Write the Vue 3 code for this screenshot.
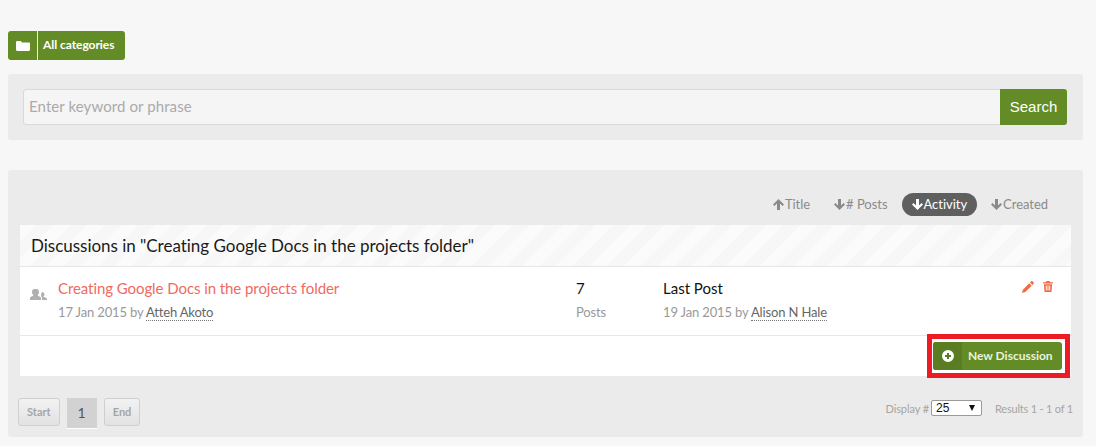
<template>
  <div class="page">
    <a class="cat-btn">
      <span class="cat-icon">
        <svg width="14" height="12" viewBox="0 0 14 12"><path d="M1.2 1h3.6l1.2 1.5h6.800c.6 0 1.200.5 1.200 1.100v6.200c0 .7-.6 1.200-1.200 1.200H1.200C.6 11 0 10.500 0 9.800V2.200C0 1.500.6 1 1.200 1z" fill="#fff" /></svg>
      </span>
      <span class="cat-label">All categories</span>
    </a>

    <div class="panel search-panel">
      <div class="search-box">
        <div class="search-input">Enter keyword or phrase</div>
        <div class="search-btn">Search</div>
      </div>
    </div>

    <div class="panel main-panel">
      <div class="sort-row">
        <span v-for="s in sorts" :key="s.label" class="sort" :class="{ active: s.active }">
          <svg class="arrow" :class="{ up: s.up }" width="11" height="11" viewBox="0 0 11 11"><path d="M5.500 11 0 5.500l1.500-1.400 2.500 2.500V0h3v6.600l2.500-2.500L11 5.500z" fill="currentColor" /></svg>{{ s.label }}
        </span>
      </div>

      <div class="list">
        <div class="list-head">Discussions in "Creating Google Docs in the projects folder"</div>
        <div class="row">
          <svg class="people" width="17" height="11" viewBox="0 0 17 11">
            <path d="M6.500 0C8 0 9 1.200 9 3c0 1.300-.5 2.300-1.200 2.900v.8c1.600.5 3.200 1.300 3.200 2.300v2H0V9c0-1 1.600-1.800 3.200-2.300v-.8C2.500 5.300 2 4.300 2 3c0-1.800 1-3 2.500-3z" fill="#b0b0b0" />
            <path d="M12.500 3c1.200 0 2 1 2 2.300 0 1-.4 1.800-1 2.200v.5c1.600.4 3.500 1 3.500 1.800V11h-5V9c0-.7-.4-1.300-1-1.800.2-.5.200-1 .1-1.500.1-1.500 1-2.700 1.400-2.700z" fill="#b0b0b0" />
          </svg>
          <div class="col-title">
            <div class="title">Creating Google Docs in the projects folder</div>
            <div class="meta">17 Jan 2015 by <span class="user">Atteh Akoto</span></div>
          </div>
          <div class="col-posts">
            <div class="big">7</div>
            <div class="meta">Posts</div>
          </div>
          <div class="col-last">
            <div class="big">Last Post</div>
            <div class="meta">19 Jan 2015 by <span class="user">Alison N Hale</span></div>
          </div>
          <div class="actions">
            <svg width="12" height="12" viewBox="0 0 13 13"><path d="M10 .4c.4-.4 1-.4 1.400 0l1.200 1.200c.4.4.4 1 0 1.400l-1.300 1.300-2.600-2.600zM7.900 2.500l2.600 2.600-6.900 6.900L0 13l1-3.600z" fill="#ef6a45" /></svg>
            <svg width="10" height="11" viewBox="0 0 11 12"><path d="M3.800 0h3.400l.6 1.300H11v1.300H0V1.300h3.200zM1 3.400h9l-.6 8c0 .3-.3.600-.6.600H2.200c-.3 0-.6-.3-.6-.6zm2 1.400.2 5.600h1L4 4.800zm2 0v5.600h1V4.800zm2 0-.2 5.600h1l.2-5.600z" fill="#ef6a45" /></svg>
          </div>
        </div>
        <div class="list-foot">
          <a class="new-btn">
            <span class="new-icon">
              <svg width="12" height="12" viewBox="0 0 12 12"><path d="M6 0a6 6 0 1 1 0 12A6 6 0 0 1 6 0zM5 3v2H3v2h2v2h2V7h2V5H7V3z" fill="#fff" fill-rule="evenodd" /></svg>
            </span>
            <span class="new-label">New Discussion</span>
          </a>
          <div class="highlight"></div>
        </div>
      </div>

      <div class="pager-row">
        <div class="pager">
          <span class="pg">Start</span>
          <span class="pg current">1</span>
          <span class="pg">End</span>
        </div>
        <div class="results">
          <span class="res-text">Display #</span>
          <span class="fake-select">25<i class="caret"></i></span>
          <span class="res-text res-count">Results 1 - 1 of 1</span>
        </div>
      </div>
    </div>
  </div>
</template>

<script setup>
const sorts = [
  { label: 'Title', up: true },
  { label: '# Posts' },
  { label: 'Activity', active: true },
  { label: 'Created' },
]
</script>

<style>
html, body { background: #f7f7f7; }
</style>

<style scoped>
.page {
  padding: 31px 13px 0 8px;
  font-family: Lato, "Liberation Sans", sans-serif;
  color: #111;
  height: 415px;
  overflow: hidden;
}
.cat-btn {
  display: inline-flex; height: 29px; background: #648c26; border-radius: 3px;
  color: #fff; font-size: 12px; font-weight: 700; align-items: stretch; letter-spacing: -0.05px;
}
.cat-icon { width: 29px; display: flex; align-items: center; justify-content: center; border-right: 1px solid #e8efdc; }
.cat-label { padding: 0 11px 0 5px; line-height: 28px; }

.panel { background: #ebebeb; border-radius: 3px; }
.search-panel { margin-top: 14px; padding: 15px 16px 15px 15px; height: 66px; box-sizing: border-box; }
.search-box {
  display: flex; height: 36px; box-sizing: border-box;
  border: 1px solid #d9d9d9; border-radius: 3px; background: #f5f5f5;
}
.search-input { flex: 1; padding-left: 5px; font-size: 15px; line-height: 33px; color: #aaa; letter-spacing: 0.09px; }
.search-btn {
  width: 67px; margin: -1px; height: 36px; background: #648c26; color: #fff;
  font-family: "Liberation Sans", sans-serif; font-size: 15px; line-height: 35px; text-align: center;
  border-radius: 0 3px 3px 0;
}

.main-panel { margin-top: 30px; padding: 23px 12px 10px; height: 267px; box-sizing: border-box; }
.sort-row { display: flex; justify-content: flex-end; align-items: center; height: 23px; padding-right: 13px; margin-bottom: 9px; font-size: 13px; color: #8a8a8a; letter-spacing: -0.03px; }
.sort { display: inline-flex; align-items: center; height: 23px; box-sizing: border-box; padding: 0 10px 1px; border-radius: 12px; margin-left: 4px; }
.sort.active { background: #5f5f5f; color: #fff; }
.arrow { margin-right: 1px; }
.arrow.up { transform: rotate(180deg); }

.list { background: #fff; }
.list-head {
  height: 42px; box-sizing: border-box; padding-left: 11px; line-height: 41px; font-size: 17px; color: #1a1a1a;
  border-bottom: 1px solid #e6e6e6; letter-spacing: -0.02px;
  background: repeating-linear-gradient(135deg, #fbfbfb 0 12px, #f7f7f7 12px 24px);
}
.row { display: flex; height: 69px; box-sizing: border-box; border-bottom: 1px solid #e8e8e8; padding-top: 11px; }
.people { margin: 11px 11px 0 10px; flex: none; }
.col-title { width: 518px; }
.col-posts { width: 87px; }
.col-last { flex: 1; }
.title { font-size: 15px; line-height: 21px; color: #ef6a62; letter-spacing: -0.07px; }
.big { font-size: 15px; line-height: 21px; color: #111; }
.meta { font-size: 13px; line-height: 18px; margin-top: 4px; color: #999; letter-spacing: -0.15px; }
.user { color: #666; border-bottom: 1px dotted #777; }
.actions { display: flex; gap: 9px; padding: 3px 18px 0 0; align-items: flex-start; }

.list-foot { height: 40px; display: flex; justify-content: flex-end; align-items: center; padding-right: 9px; position: relative; }
.new-btn { display: inline-flex; height: 28px; background: #648c26; border-radius: 3px; color: #e9f2dd; font-size: 12px; font-weight: 700; overflow: hidden; letter-spacing: -0.02px; }
.new-icon { width: 29px; background: #5a7d24; display: flex; align-items: center; justify-content: center; }
.new-label { padding: 0 5px 0 6px; line-height: 28px; width: 89px; }
.highlight { position: absolute; right: 1px; top: -2px; width: 143px; height: 44px; box-sizing: border-box; border: 5px solid #ed1c24; }

.pager-row { display: flex; justify-content: space-between; align-items: flex-start; margin: 22px -2px 0 -2px; height: 30px; }
.pager { display: flex; gap: 7px; }
.pg {
  height: 28px; box-sizing: border-box; padding: 0 8px; line-height: 26px; font-size: 11px; font-weight: 700; color: #a5a5a5;
  border: 1px solid #cfcfcf; border-radius: 3px; background: linear-gradient(#f2f2f2, #e2e2e2);
}
.pg.current {
  width: 30px; height: 31px; padding: 0; text-align: center; font-size: 14px; font-weight: 400; color: #555; line-height: 29px;
  background: #d2d2d2; border: none; border-bottom: 1px solid #fff; border-radius: 0;
}
.results { display: flex; align-items: center; font-size: 11px; color: #a5a5a5; height: 20px; }
.res-text { letter-spacing: -0.1px; }
.fake-select {
  width: 51px; height: 16px; box-sizing: border-box; margin-left: 2px; padding-left: 4px; background: #fff;
  border: 1px solid #9a9a9a; border-radius: 2px; color: #111; font-size: 12px; line-height: 14px; position: relative;
  font-family: "Liberation Sans", sans-serif; flex: none;
}
.caret {
  position: absolute; right: 6px; top: 4px; width: 0; height: 0;
  border-left: 3.500px solid transparent; border-right: 3.500px solid transparent; border-top: 6px solid #111;
}
.res-count { margin-left: 13px; letter-spacing: -0.2px; }
</style>
